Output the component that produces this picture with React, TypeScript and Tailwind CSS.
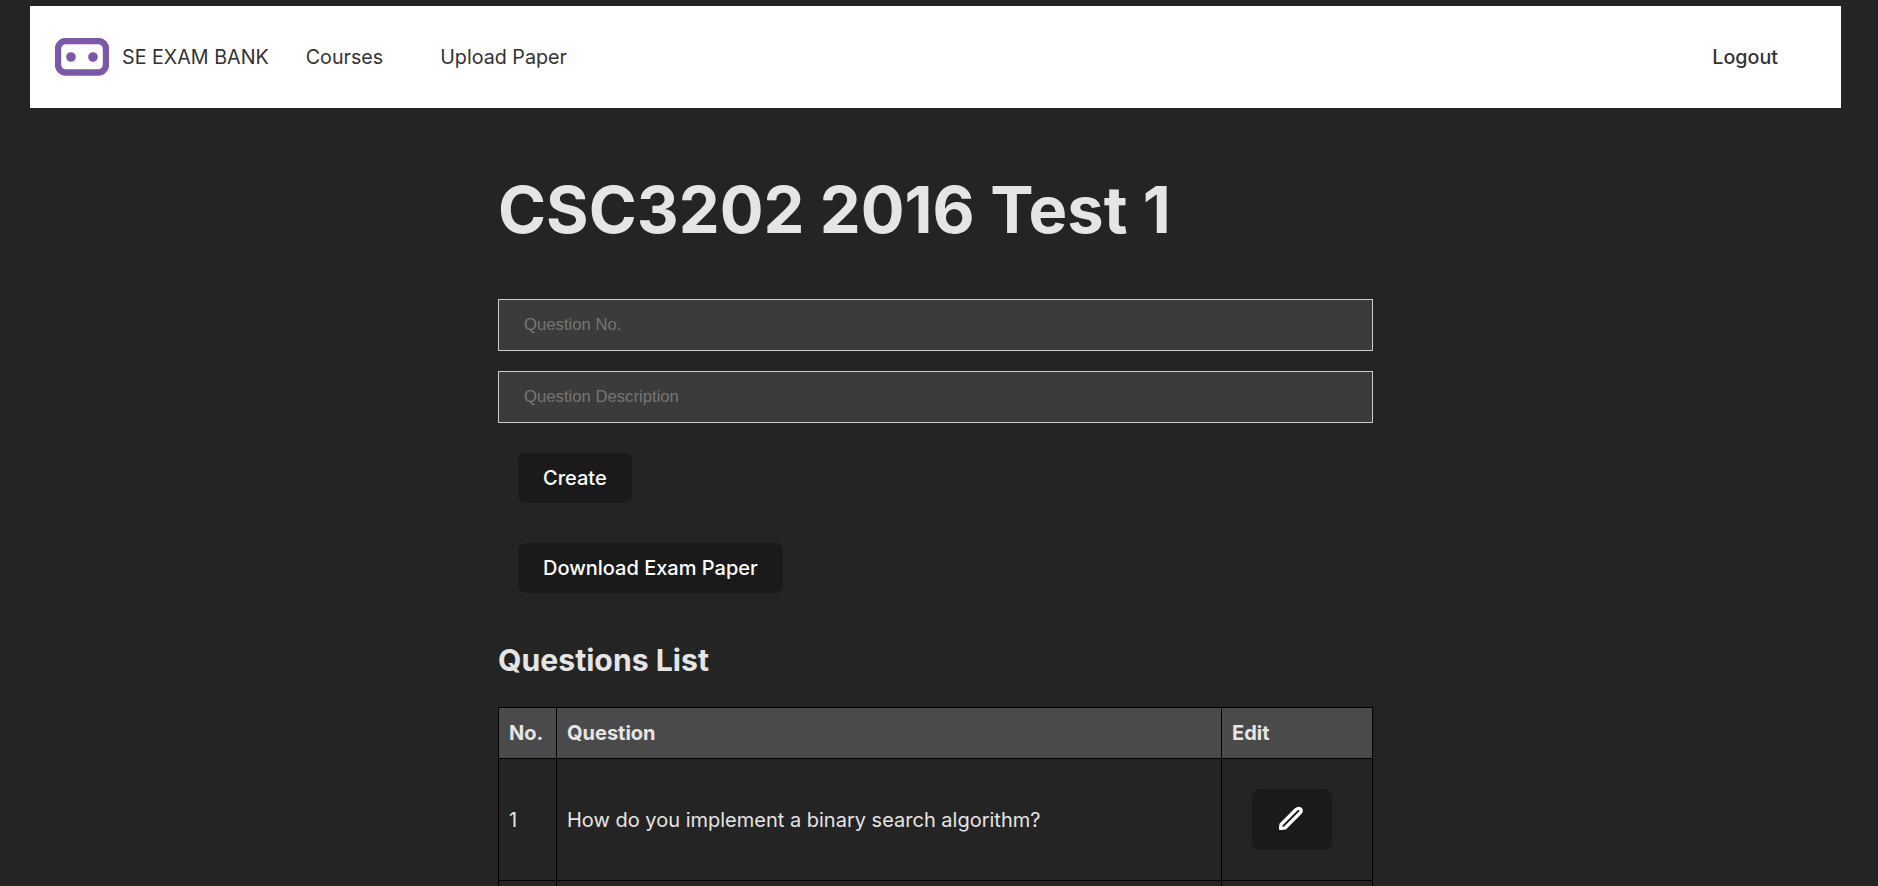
export default function App() {
  return (
    <div className="h-[886px] overflow-hidden bg-[#242424] font-['Inter',sans-serif]">
      <nav className="ml-[30px] mt-[6px] flex h-[102px] w-[1811px] items-center bg-white pl-[25px] pr-[63px] text-[19.7px] text-[#333]">
        <svg width="54" height="38" viewBox="0 0 54 38" className="shrink-0">
          <rect x="3" y="3" width="48" height="31.5" rx="8" fill="#fff" stroke="#7b59a8" strokeWidth="6.4" />
          <circle cx="16" cy="19" r="4.8" fill="#7b59a8" />
          <circle cx="38" cy="19" r="4.8" fill="#7b59a8" />
        </svg>
        <span className="ml-[13px] mt-[2px]">SE EXAM BANK</span>
        <a className="ml-[37px] mt-[2px]">Courses</a>
        <a className="ml-[57px] mt-[2px]">Upload Paper</a>
        <a className="ml-auto mt-[2px] font-medium">Logout</a>
      </nav>
      <main className="ml-[498px] w-[875px]">
        <h1 className="mt-[66px] text-[65px] font-bold leading-[72px] text-[#e5e5e5]">CSC3202 2016 Test 1</h1>
        <input placeholder="Question No." className="mt-[53px] block h-[52px] w-full border border-[#ccc] bg-[#3b3b3b] px-[25px] font-['Liberation_Sans',sans-serif] text-[16.7px] text-white placeholder:text-[#757575]" />
        <input placeholder="Question Description" className="mt-[20px] block h-[52px] w-full border border-[#ccc] bg-[#3b3b3b] px-[25px] font-['Liberation_Sans',sans-serif] text-[16.7px] text-white placeholder:text-[#757575]" />
        <button className="ml-5 mt-[30px] block h-[50px] rounded-lg bg-[#1a1a1a] px-[25px] text-[20px] font-medium text-white">Create</button>
        <button className="ml-5 mt-10 block h-[50px] rounded-lg bg-[#1a1a1a] px-[25px] text-[20px] font-medium text-white">Download Exam Paper</button>
        <h2 className="mt-[50px] text-[30.2px] font-bold leading-[34px] text-[#e5e5e5]">Questions List</h2>
        <table className="mt-[30px] w-full table-fixed border-collapse text-[20px] text-[#e5e5e5]">
          <colgroup>
            <col className="w-[58px]" />
            <col />
            <col className="w-[151px]" />
          </colgroup>
          <thead>
            <tr className="h-[51px] bg-[#4a4a4a] text-left font-bold">
              <th className="border border-black px-[10px]">No.</th>
              <th className="border border-black px-[10px]">Question</th>
              <th className="border border-black px-[10px]">Edit</th>
            </tr>
          </thead>
          <tbody>
            <tr className="h-[122px]">
              <td className="border border-black px-[10px]">1</td>
              <td className="border border-black px-[10px]">How do you implement a binary search algorithm?</td>
              <td className="border border-black pl-[30px] pr-[10px]">
                <button className="flex h-[61px] w-20 items-center justify-center rounded-lg bg-[#1a1a1a]">
                  <svg width="24" height="24" viewBox="0 0 24 24" fill="none" stroke="#fff" strokeWidth="3.2" strokeLinejoin="round" className="mb-1 mr-0.5">
                    <path d="M1.5 22.5 L2 18.5 L17 3.5 Q19.5 1.5 21.5 3 Q23 5 21 7 L6 22 Z" />
                  </svg>
                </button>
              </td>
            </tr>
            <tr className="h-[122px]">
              <td className="border border-black px-[10px]">&nbsp;</td>
              <td className="border border-black px-[10px]">&nbsp;</td>
              <td className="border border-black px-[10px]">&nbsp;</td>
            </tr>
          </tbody>
        </table>
      </main>
    </div>
  );
}
